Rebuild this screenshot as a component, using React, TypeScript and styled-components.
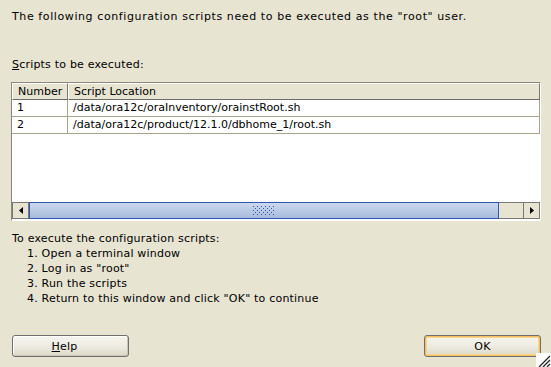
import React from "react";
import styled, { createGlobalStyle } from "styled-components";

const Global = createGlobalStyle`
  html, body { margin: 0; padding: 0; }
  body {
    background: #e7e4d2;
    font-family: "DejaVu Sans", "Liberation Sans", sans-serif;
    font-size: 11px;
    color: #000;
  }
`;

const Window = styled.div`
  position: relative;
  width: 551px;
  height: 367px;
  box-sizing: border-box;
  padding: 9px 10px 10px 11px;
  display: flex;
  flex-direction: column;
  overflow: hidden;
`;

const Line = styled.div<{ $indent?: number; $top?: number; $spacing?: number }>`
  height: 15px;
  line-height: 15px;
  white-space: nowrap;
  padding-left: ${(p) => 1 + (p.$indent ?? 0)}px;
  margin-top: ${(p) => p.$top ?? 0}px;
  letter-spacing: ${(p) => p.$spacing ?? 0.2}px;
`;

const Mnemonic = styled.span`
  text-decoration: underline;
`;

const TableBox = styled.div`
  margin-top: 10px;
  width: 530px;
  height: 139px;
  box-sizing: border-box;
  border-top: 1px solid #8a887c;
  border-left: 1px solid #8a887c;
  border-right: 1px solid #ffffff;
  border-bottom: 1px solid #ffffff;
  background: #ffffff;
  display: flex;
  flex-direction: column;
`;

const Grid = styled.div`
  flex: 1;
  display: grid;
  grid-template-columns: 56px 1fr;
  grid-auto-rows: min-content;
  align-content: start;
`;

const HeadCell = styled.div`
  height: 17px;
  box-sizing: border-box;
  line-height: 16px;
  padding-left: 5px;
  background: #e7e4d2;
  border-top: 1px solid #ffffff;
  border-left: 1px solid #ffffff;
  border-right: 1px solid #7c7b72;
  border-bottom: 1px solid #6f6e66;
  white-space: nowrap;
`;

const Cell = styled.div`
  height: 17px;
  box-sizing: border-box;
  line-height: 16px;
  padding-left: 5px;
  border-right: 1px solid #a7a58f;
  border-bottom: 1px solid #a7a58f;
  white-space: nowrap;
`;

const ScrollBar = styled.div`
  height: 17px;
  display: flex;
  background: #e7e4d2;
  margin-bottom: 1px;
`;

const ArrowButton = styled.div`
  width: 17px;
  height: 17px;
  box-sizing: border-box;
  border: 1px solid #7a7a74;
  background: #e7e4d2;
  display: flex;
  align-items: center;
  justify-content: center;
`;

const Thumb = styled.div`
  width: 470px;
  height: 17px;
  box-sizing: border-box;
  border: 1px solid #2e58b8;
  background: linear-gradient(#cbd8ee, #aabcdc);
  display: flex;
  align-items: center;
  justify-content: center;
`;

const Track = styled.div`
  flex: 1;
  height: 17px;
  box-sizing: border-box;
  border-top: 1px solid #7a7a74;
  border-bottom: 1px solid #7a7a74;
  background: #e7e4d2;
`;

const Instructions = styled.div`
  margin-top: 10px;
  display: flex;
  flex-direction: column;
`;

const Footer = styled.div`
  margin-top: auto;
  display: flex;
  justify-content: space-between;
  padding-left: 1px;
`;

const Button = styled.button<{ $focused?: boolean; $shift?: number }>`
  width: 117px;
  height: 22px;
  box-sizing: border-box;
  font-family: "DejaVu Sans", "Liberation Sans", sans-serif;
  font-size: 11px;
  letter-spacing: 0.2px;
  color: #000;
  border: 1px solid #6f6f6f;
  border-radius: 3px;
  padding: 0 ${(p) => p.$shift ?? 0}px 0 0;
  background: linear-gradient(#f6f5ee 0%, #eeece2 50%, #dcd9c8 100%);
  box-shadow: ${(p) =>
    p.$focused
      ? "inset 0 0 0 1px #f5c063, inset 0 0 0 2px #f9d48d"
      : "inset -1px -1px 0 #c9c6b6, inset 1px 1px 0 #ffffff"};
`;

const Grip = styled.svg`
  position: absolute;
  right: 0;
  bottom: 0;
`;

function LeftArrow() {
  return (
    <svg width="4" height="7" viewBox="0 0 4 7">
      <path d="M4 0 L0 3.5 L4 7 Z" fill="#000" />
    </svg>
  );
}

function RightArrow() {
  return (
    <svg width="4" height="7" viewBox="0 0 4 7">
      <path d="M0 0 L4 3.5 L0 7 Z" fill="#000" />
    </svg>
  );
}

function GripDots() {
  const dots: React.ReactNode[] = [];
  for (let r = 0; r < 5; r++) {
    for (let c = 0; c < 11; c++) {
      if ((r + c) % 2 === 0) {
        dots.push(<rect key={`${r}-${c}`} x={c * 2} y={r * 2} width="1" height="1" fill="#2f55b0" />);
      }
    }
  }
  return (
    <svg width="22" height="9" viewBox="0 0 22 9">
      {dots}
    </svg>
  );
}

const rows = [
  ["1", "/data/ora12c/oraInventory/orainstRoot.sh"],
  ["2", "/data/ora12c/product/12.1.0/dbhome_1/root.sh"],
];

export default function App() {
  return (
    <>
      <Global />
      <Window>
        <Line $spacing={0.6}>The following configuration scripts need to be executed as the "root" user.</Line>
        <Line $top={33}>
          <Mnemonic>S</Mnemonic>cripts to be executed:
        </Line>
        <TableBox>
          <Grid>
            <HeadCell>Number</HeadCell>
            <HeadCell>Script Location</HeadCell>
            {rows.map(([n, p]) => (
              <React.Fragment key={n}>
                <Cell>{n}</Cell>
                <Cell>{p}</Cell>
              </React.Fragment>
            ))}
          </Grid>
          <ScrollBar>
            <ArrowButton>
              <LeftArrow />
            </ArrowButton>
            <Thumb>
              <GripDots />
            </Thumb>
            <Track />
            <ArrowButton>
              <RightArrow />
            </ArrowButton>
          </ScrollBar>
        </TableBox>
        <Instructions>
          <Line>To execute the configuration scripts:</Line>
          <Line $indent={15}>1. Open a terminal window</Line>
          <Line $indent={15}>2. Log in as "root"</Line>
          <Line $indent={15}>3. Run the scripts</Line>
          <Line $indent={15}>4. Return to this window and click "OK" to continue</Line>
        </Instructions>
        <Footer>
          <Button $shift={12}>
            <Mnemonic>H</Mnemonic>elp
          </Button>
          <Button $focused>OK</Button>
        </Footer>
        <Grip width="15" height="14" viewBox="0 0 15 14">
          <rect width="15" height="14" fill="#ffffff" />
          <path d="M3 14 L14 3 M7 14 L14 7 M11 14 L14 11" stroke="#222" strokeWidth="1.3" />
        </Grip>
      </Window>
    </>
  );
}
